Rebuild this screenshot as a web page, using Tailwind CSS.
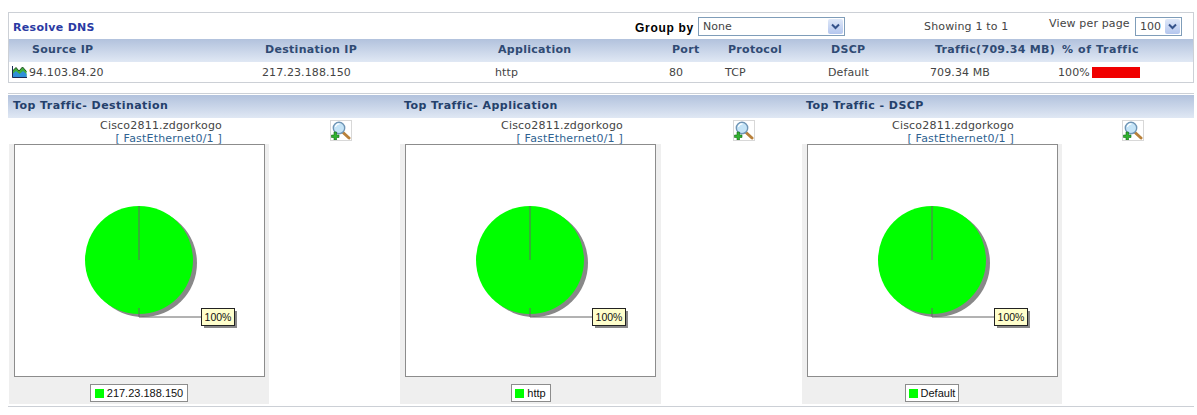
<!DOCTYPE html>
<html>
<head>
<meta charset="utf-8">
<script src="https://cdn.jsdelivr.net/npm/@tailwindcss/browser@4"></script>
</head>
<body class="bg-white font-['DejaVu_Sans',sans-serif] text-[11px] text-[#444] w-[1197px] h-[415px] overflow-hidden">
<div class="pt-[12px] pl-[8px]">
  <!-- Table panel -->
  <div class="w-[1186px] h-[71px] border border-[#ccd0d6]">
    <div class="h-[26px] flex items-center relative">
      <div class="w-[626px] pl-[4px] pt-[4px] font-bold text-[#2a3aa3] tracking-[0.3px]">Resolve DNS</div>
      <div class="w-[63px] font-bold text-black text-[12px] font-['Liberation_Sans',sans-serif] tracking-[0.7px] pt-[4px] whitespace-nowrap">Group by</div>
      <div class="w-[147px] h-[19px] border border-[#7f9db9] flex items-center justify-between pl-[4px] pr-[1px] bg-white mt-[1px]">
        <span class="pt-[2px]">None</span>
        <span class="w-[15px] h-[15px] rounded-[2px] bg-gradient-to-b from-[#dfe8f8] to-[#b4c6ee] flex items-center justify-center"><svg width="9" height="7" viewBox="0 0 9 7"><path d="M1 1.5 L4.5 5 L8 1.5" fill="none" stroke="#34528a" stroke-width="2"/></svg></span>
      </div>
      <div class="ml-[79px] w-[125px] whitespace-nowrap pt-[2px] tracking-[0.15px]">Showing 1 to 1</div>
      <div class="w-[86px] whitespace-nowrap -mt-[4px] tracking-[0.15px]">View per page</div>
      <div class="w-[47px] h-[19px] border border-[#7f9db9] flex items-center justify-between pl-[4px] pr-[1px] bg-white mt-[1px]">
        <span class="pt-[2px]">100</span>
        <span class="w-[15px] h-[15px] rounded-[2px] bg-gradient-to-b from-[#dfe8f8] to-[#b4c6ee] flex items-center justify-center"><svg width="9" height="7" viewBox="0 0 9 7"><path d="M1 1.5 L4.5 5 L8 1.5" fill="none" stroke="#34528a" stroke-width="2"/></svg></span>
      </div>
    </div>
    <div class="h-[23px] grid grid-cols-[250px_233px_174px_56px_103px_102px_127px_1fr] items-center bg-gradient-to-b from-[#b2c2dd] to-[#e0e8f4] font-bold text-[#2f4a73] whitespace-nowrap tracking-[0.3px]">
      <div class="pl-[23px]">Source IP</div>
      <div class="pl-[6px]">Destination IP</div>
      <div class="pl-[6px]">Application</div>
      <div class="pl-[6px]">Port</div>
      <div class="pl-[6px]">Protocol</div>
      <div class="pl-[6px]">DSCP</div>
      <div class="pl-[8px]">Traffic(709.34 MB)</div>
      <div class="pl-[8px] tracking-[0.6px]">% of Traffic</div>
    </div>
    <div class="h-[20px] pt-[3px] grid grid-cols-[250px_233px_174px_56px_103px_102px_128px_1fr] items-center whitespace-nowrap tracking-[0.1px]">
      <div class="pl-[3px] flex items-center gap-[2px]">
        <svg class="-mt-[3px]" width="15" height="12" viewBox="0 0 15 12"><path d="M0.5 11.5V5L4 1.5 7 5 10.5 1 14.5 5.500V11.500Z" fill="#3fae3a"/><path d="M0.5 11.5V8L4 5 7.5 8 11 5 14.5 8V11.500Z" fill="#2f8fd8"/><path d="M0.5 0V11.500H15" fill="none" stroke="#1c2a55"/><path d="M0.5 5L4 1.5 7 5 10.5 1 14.5 5.500" fill="none" stroke="#1d4f20"/></svg>
        <span>94.103.84.20</span>
      </div>
      <div class="pl-[3px]">217.23.188.150</div>
      <div class="pl-[3px]">http</div>
      <div class="pl-[3px]">80</div>
      <div class="pl-[3px]">TCP</div>
      <div class="pl-[3px]">Default</div>
      <div class="pl-[3px]">709.34 MB</div>
      <div class="pl-[3px] flex items-center"><span class="w-[34px]">100%</span><span class="w-[48px] h-[11px] bg-[#f00000] -mt-[2px]"></span></div>
    </div>
  </div>

  <!-- Charts panel -->
  <div class="mt-[10px] w-[1186px] h-[314px] border-t border-b border-[#ccd0d6]">
    <div class="mt-[1px] h-[23px] grid grid-cols-[392px_402px_1fr] items-center bg-gradient-to-b from-[#b2c2dd] to-[#e0e8f4] font-bold text-[#24406b] whitespace-nowrap tracking-[0.45px]">
      <div class="pl-[5px]">Top Traffic- Destination</div>
      <div class="pl-[4px]">Top Traffic- Application</div>
      <div class="pl-[4px]">Top Traffic - DSCP</div>
    </div>
    <div class="grid grid-cols-[392px_402px_1fr]">
      <!-- col 1 -->
      <div>
        <div class="h-[26px] flex ml-[1px]">
          <div class="w-[213px] pt-[1px] text-right leading-[13px] whitespace-nowrap tracking-[0.2px]"><div>Cisco2811.zdgorkogo</div><div class="text-[#2f6391]">[ FastEthernet0/1 ]</div></div>
          <div class="ml-[108px] mt-[2px] w-[22px] h-[21px] border border-[#d8d8d8] flex items-center justify-center"><svg width="20" height="19" viewBox="0 0 20 19"><path d="M11.5 11 L18 17" stroke="#b8803a" stroke-width="3" stroke-linecap="round"/><circle cx="8" cy="7" r="5.7" fill="#c5e4f7" stroke="#6f95b5" stroke-width="1.4"/><path d="M4.5 6 a4 4 0 0 1 4-3.2" fill="none" stroke="#fff" stroke-width="1.2"/><path d="M3 11V14H0.5V16.500H3V19H5.500V16.500H8V14H5.500V11Z" fill="#2fb32f" stroke="#156a15" stroke-width=".6"/></svg></div>
        </div>
        <div class="ml-[1px] w-[260px] h-[260px] bg-[#efefef] flex flex-col items-center">
          <div class="w-[251px] h-[233px] border border-[#8c8c8c] bg-white">
            <svg width="249" height="231" viewBox="0 0 249 231">
              <circle cx="128" cy="118" r="54" fill="#888"/>
              <circle cx="124" cy="115" r="54" fill="#00ff00"/>
              <path d="M124 61V115M124 163V172H187" fill="none" stroke="#666"/>
              <rect x="189" y="166" width="33" height="17" fill="#888"/>
              <rect x="186.500" y="163.500" width="33" height="17" fill="#ffffcc" stroke="#222"/>
              <text x="203" y="176" text-anchor="middle" font-family="Liberation Sans" font-size="10.500" fill="#111">100%</text>
            </svg>
          </div>
          <div class="mt-[7px] h-[18px] w-[98px] justify-center border border-[#8c8c8c] bg-white flex items-center gap-[3px] font-['Liberation_Sans',sans-serif] text-[11px] text-[#111]"><span class="w-[9px] h-[9px] bg-[#00ff00]"></span>217.23.188.150</div>
        </div>
      </div>
      <!-- col 2 -->
      <div>
        <div class="h-[26px] flex">
          <div class="w-[223px] pt-[1px] text-right leading-[13px] whitespace-nowrap tracking-[0.2px]"><div>Cisco2811.zdgorkogo</div><div class="text-[#2f6391]">[ FastEthernet0/1 ]</div></div>
          <div class="ml-[110px] mt-[2px] w-[22px] h-[21px] border border-[#d8d8d8] flex items-center justify-center"><svg width="20" height="19" viewBox="0 0 20 19"><path d="M11.5 11 L18 17" stroke="#b8803a" stroke-width="3" stroke-linecap="round"/><circle cx="8" cy="7" r="5.7" fill="#c5e4f7" stroke="#6f95b5" stroke-width="1.4"/><path d="M4.5 6 a4 4 0 0 1 4-3.2" fill="none" stroke="#fff" stroke-width="1.2"/><path d="M3 11V14H0.5V16.500H3V19H5.500V16.500H8V14H5.500V11Z" fill="#2fb32f" stroke="#156a15" stroke-width=".6"/></svg></div>
        </div>
        <div class="w-[261px] h-[260px] bg-[#efefef] flex flex-col items-center">
          <div class="w-[251px] h-[233px] border border-[#8c8c8c] bg-white">
            <svg width="249" height="231" viewBox="0 0 249 231">
              <circle cx="128" cy="118" r="54" fill="#888"/>
              <circle cx="124" cy="115" r="54" fill="#00ff00"/>
              <path d="M124 61V115M124 163V172H187" fill="none" stroke="#666"/>
              <rect x="189" y="166" width="33" height="17" fill="#888"/>
              <rect x="186.500" y="163.500" width="33" height="17" fill="#ffffcc" stroke="#222"/>
              <text x="203" y="176" text-anchor="middle" font-family="Liberation Sans" font-size="10.500" fill="#111">100%</text>
            </svg>
          </div>
          <div class="mt-[7px] h-[18px] w-[40px] justify-center border border-[#8c8c8c] bg-white flex items-center gap-[3px] font-['Liberation_Sans',sans-serif] text-[11px] text-[#111]"><span class="w-[9px] h-[9px] bg-[#00ff00]"></span>http</div>
        </div>
      </div>
      <!-- col 3 -->
      <div>
        <div class="h-[26px] flex">
          <div class="w-[212px] pt-[1px] text-right leading-[13px] whitespace-nowrap tracking-[0.2px]"><div>Cisco2811.zdgorkogo</div><div class="text-[#2f6391]">[ FastEthernet0/1 ]</div></div>
          <div class="ml-[108px] mt-[2px] w-[22px] h-[21px] border border-[#d8d8d8] flex items-center justify-center"><svg width="20" height="19" viewBox="0 0 20 19"><path d="M11.5 11 L18 17" stroke="#b8803a" stroke-width="3" stroke-linecap="round"/><circle cx="8" cy="7" r="5.7" fill="#c5e4f7" stroke="#6f95b5" stroke-width="1.4"/><path d="M4.5 6 a4 4 0 0 1 4-3.2" fill="none" stroke="#fff" stroke-width="1.2"/><path d="M3 11V14H0.5V16.500H3V19H5.500V16.500H8V14H5.500V11Z" fill="#2fb32f" stroke="#156a15" stroke-width=".6"/></svg></div>
        </div>
        <div class="w-[260px] h-[260px] bg-[#efefef] flex flex-col items-center">
          <div class="w-[251px] h-[233px] border border-[#8c8c8c] bg-white">
            <svg width="249" height="231" viewBox="0 0 249 231">
              <circle cx="128" cy="118" r="54" fill="#888"/>
              <circle cx="124" cy="115" r="54" fill="#00ff00"/>
              <path d="M124 61V115M124 163V172H187" fill="none" stroke="#666"/>
              <rect x="189" y="166" width="33" height="17" fill="#888"/>
              <rect x="186.500" y="163.500" width="33" height="17" fill="#ffffcc" stroke="#222"/>
              <text x="203" y="176" text-anchor="middle" font-family="Liberation Sans" font-size="10.500" fill="#111">100%</text>
            </svg>
          </div>
          <div class="mt-[7px] h-[18px] w-[54px] justify-center border border-[#8c8c8c] bg-white flex items-center gap-[3px] font-['Liberation_Sans',sans-serif] text-[11px] text-[#111]"><span class="w-[9px] h-[9px] bg-[#00ff00]"></span>Default</div>
        </div>
      </div>
    </div>
  </div>
</div>
</body>
</html>
